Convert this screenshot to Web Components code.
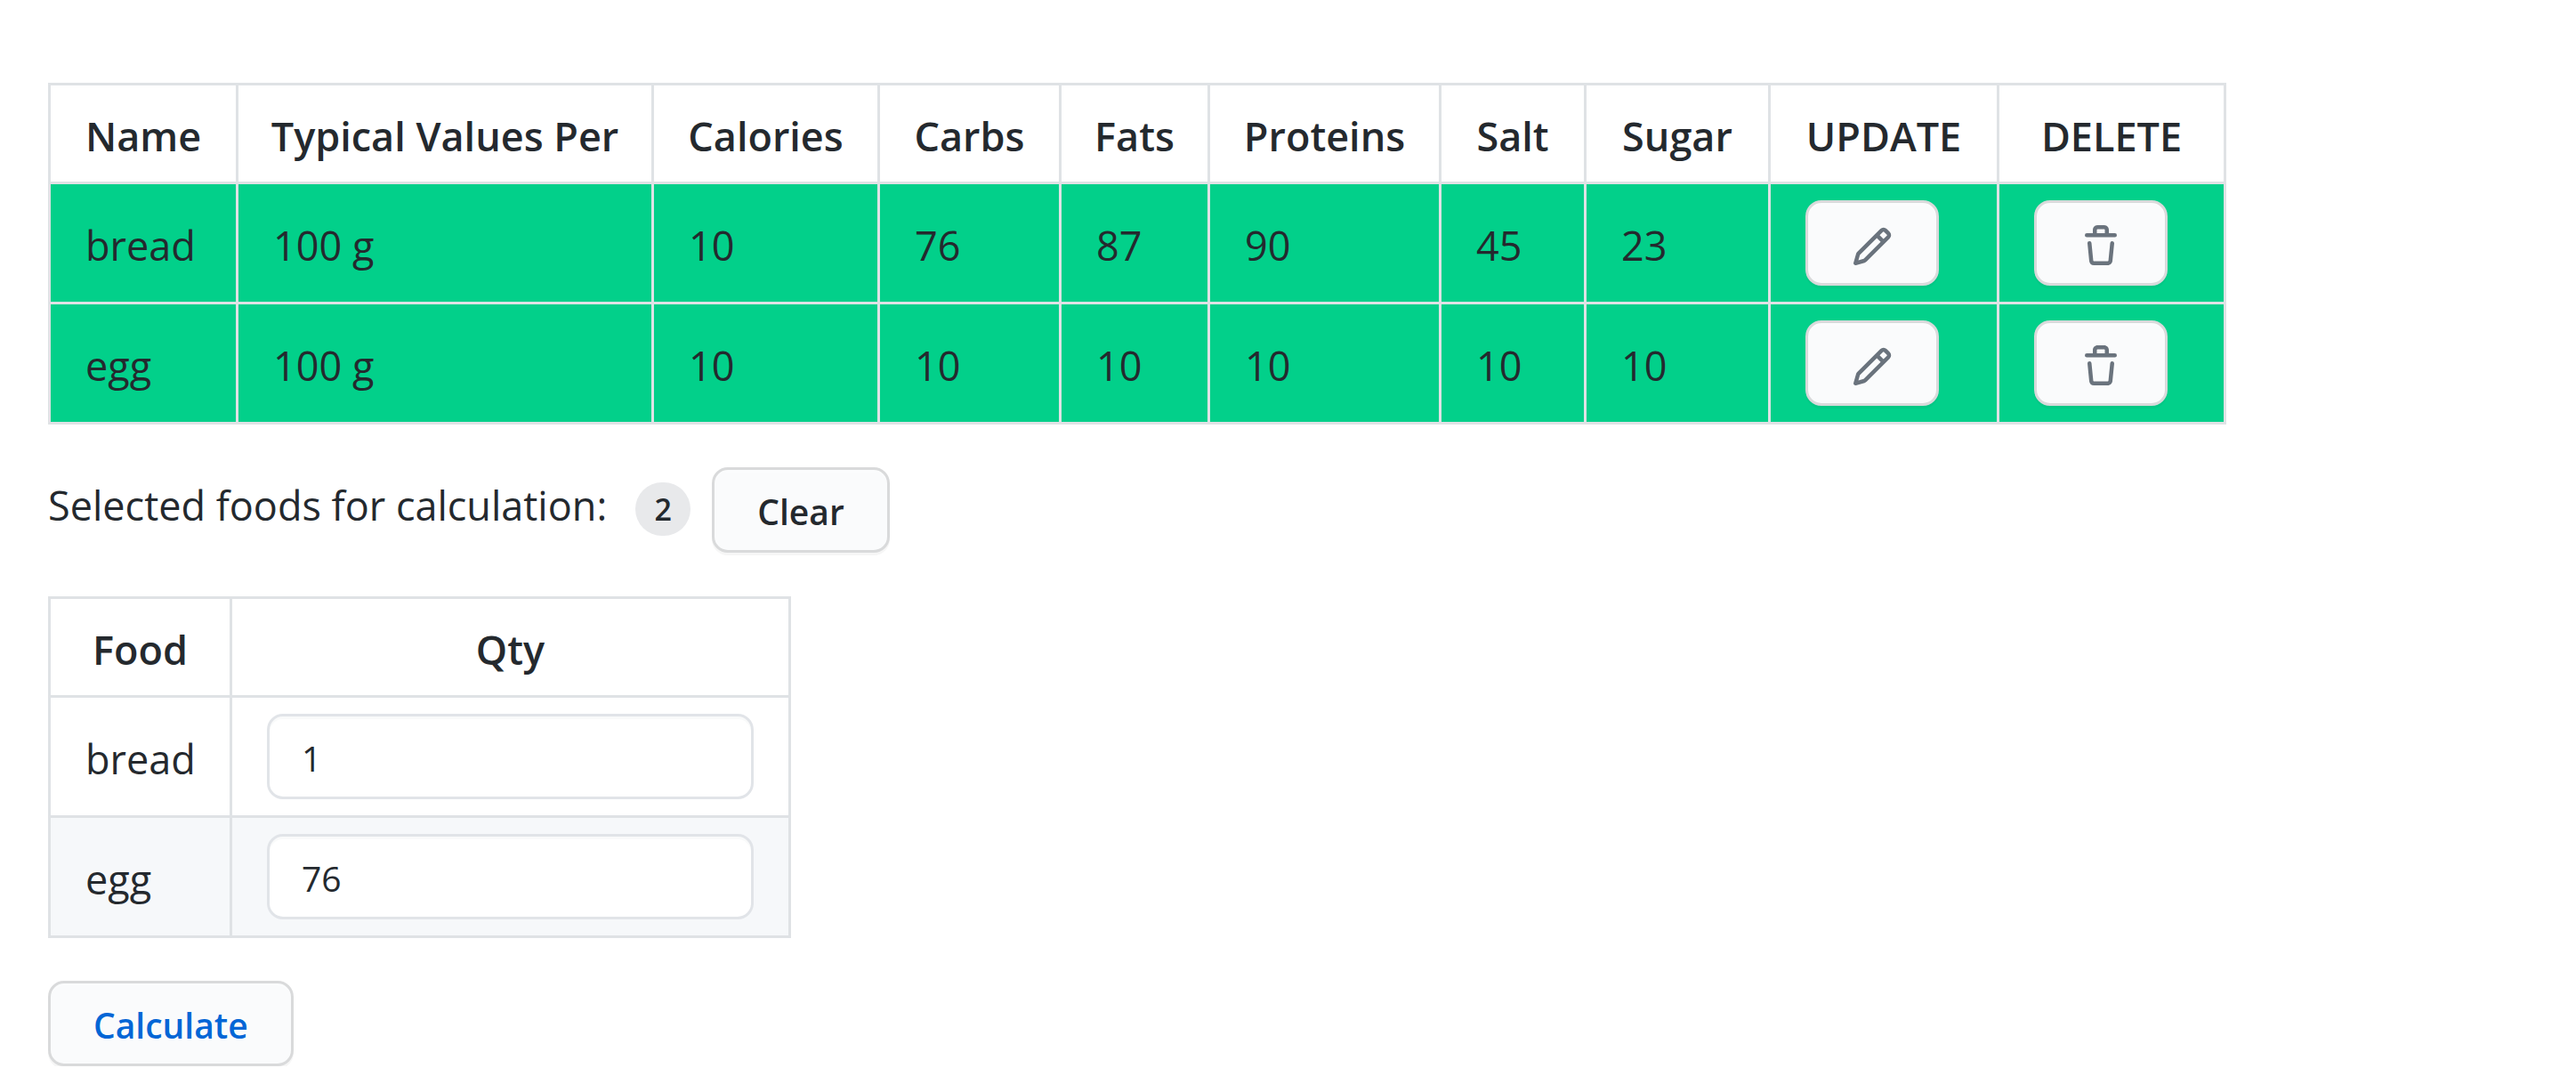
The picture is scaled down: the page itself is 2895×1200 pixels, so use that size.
<!DOCTYPE html>
<html lang="en">
<head>
<meta charset="utf-8">
<title>Foods</title>
<style>
  body {
    margin: 0;
    background: #fff;
    color: #24292e;
    font-family: "Open Sans", "Noto Sans", sans-serif;
    font-size: 45px;
    line-height: 72px;
    --line: #dfe2e5;
  }
</style>
</head>
<body>
<food-page></food-page>

<script>
const ICONS = {
  pencil: 'M11.013 1.427a1.75 1.75 0 012.474 0l1.086 1.086a1.75 1.75 0 010 2.474l-8.61 8.61c-.21.21-.47.364-.756.445l-3.251.93a.75.75 0 01-.927-.928l.929-3.25a1.75 1.75 0 01.445-.758l8.61-8.61zm1.414 1.06a.25.25 0 00-.354 0L10.811 3.75l1.439 1.44 1.263-1.263a.25.25 0 000-.354l-1.086-1.086zM11.189 6.25L9.75 4.81l-6.286 6.287a.25.25 0 00-.064.108l-.558 1.953 1.953-.558a.249.249 0 00.108-.064l6.286-6.286z',
  trash: 'M6.5 1.75a.25.25 0 01.25-.25h2.5a.25.25 0 01.25.25V3h-3V1.75zm4.5 0V3h2.25a.75.75 0 010 1.5H2.75a.75.75 0 010-1.5H5V1.75C5 .784 5.784 0 6.75 0h2.5C10.216 0 11 .784 11 1.75zM4.496 6.675a.75.75 0 10-1.492.15l.66 6.6A1.75 1.75 0 005.405 15h5.19c.9 0 1.652-.681 1.741-1.576l.66-6.6a.75.75 0 00-1.492-.149l-.66 6.6a.25.25 0 01-.249.225h-5.19a.25.25 0 01-.249-.225l-.66-6.6z'
};

const BUTTON_CSS = `
  button {
    display: flex;
    align-items: center;
    justify-content: center;
    box-sizing: border-box;
    height: 96px;
    margin: 0;
    border: 3px solid #d9dadb;
    border-radius: 18px;
    background: #fafbfc;
    box-shadow: 0 3px 0 rgba(27,31,35,.04), inset 0 3px 0 rgba(255,255,255,.25);
    font: inherit;
    cursor: pointer;
  }`;

const TABLE_CSS = `
  :host { display: block; }
  table {
    border-collapse: separate;
    border-spacing: 0;
    border: 0 solid var(--line);
    border-width: 3px 0 0 3px;
  }
  th, td {
    padding: 21px 32px 15px 39px;
    border: 0 solid var(--line);
    border-width: 0 3px 3px 0;
    text-align: left;
    white-space: nowrap;
  }
  th { padding-left: 0; padding-right: 0; font-weight: 600; text-align: center; }
  td.control { padding: 18px 39px; }`;

class AppButton extends HTMLElement {
  connectedCallback() {
    this.attachShadow({ mode: 'open' }).innerHTML = `
      <style>
        :host { display: block; color: #24292e; }
        :host([tone="link"]) { color: #0366d6; }
        ${BUTTON_CSS}
        button { padding: 4px 48px 0; color: inherit; font-size: 39px; font-weight: 600; line-height: 60px; }
      </style>
      <button type="button"><slot></slot></button>`;
  }
}
customElements.define('app-button', AppButton);

class IconButton extends HTMLElement {
  connectedCallback() {
    this.attachShadow({ mode: 'open' }).innerHTML = `
      <style>
        :host { display: block; }
        ${BUTTON_CSS}
        button { padding: 25px 48px 17px; color: #6a737d; }
        svg { display: block; width: 48px; height: 48px; fill: currentColor; }
      </style>
      <button type="button" aria-label="${this.getAttribute('label')}">
        <svg viewBox="0 0 16 16" aria-hidden="true"><path fill-rule="evenodd" d="${ICONS[this.getAttribute('icon')]}"/></svg>
      </button>`;
  }
}
customElements.define('icon-button', IconButton);

class CounterLabel extends HTMLElement {
  connectedCallback() {
    this.attachShadow({ mode: 'open' }).innerHTML = `
      <style>
        :host {
          display: block;
          box-sizing: border-box;
          min-width: 62px;
          padding: 0 18px;
          border-radius: 30px;
          background: #e8e9eb;
          font-size: 34px;
          font-weight: 600;
          line-height: 60px;
          text-align: center;
        }
      </style>
      <slot></slot>`;
  }
}
customElements.define('counter-label', CounterLabel);

class FoodTable extends HTMLElement {
  connectedCallback() {
    const columns = [
      ['Name', 211], ['Typical Values Per', 467], ['Calories', 254], ['Carbs', 204], ['Fats', 167],
      ['Proteins', 260], ['Salt', 163], ['Sugar', 207], ['UPDATE', 257], ['DELETE', 255]
    ];
    const foods = [
      ['bread', '100 g', 10, 76, 87, 90, 45, 23],
      ['egg', '100 g', 10, 10, 10, 10, 10, 10]
    ];
    this.attachShadow({ mode: 'open' }).innerHTML = `
      <style>
        ${TABLE_CSS}
        tbody { background: #02d08a; }
      </style>
      <table>
        <colgroup>${columns.map(c => `<col style="width:${c[1]}px">`).join('')}</colgroup>
        <thead><tr>${columns.map(c => `<th scope="col">${c[0]}</th>`).join('')}</tr></thead>
        <tbody>${foods.map(f => `<tr>${f.map(v => `<td>${v}</td>`).join('')}
          <td class="control"><icon-button icon="pencil" label="Update ${f[0]}"></icon-button></td>
          <td class="control"><icon-button icon="trash" label="Delete ${f[0]}"></icon-button></td></tr>`).join('')}
        </tbody>
      </table>`;
  }
}
customElements.define('food-table', FoodTable);

class QuantityTable extends HTMLElement {
  connectedCallback() {
    const rows = [['bread', 1], ['egg', 76]];
    this.attachShadow({ mode: 'open' }).innerHTML = `
      <style>
        ${TABLE_CSS}
        tbody tr:nth-child(even) { background: #f6f8fa; }
        input {
          display: block;
          box-sizing: border-box;
          width: 547px;
          height: 96px;
          margin: 0;
          padding: 3px 36px 0;
          border: 3px solid #e1e4e8;
          border-radius: 18px;
          background: #fff;
          box-shadow: inset 0 3px 0 rgba(225,228,232,.2);
          color: inherit;
          font: inherit;
          font-size: 39px;
        }
      </style>
      <table>
        <colgroup><col style="width:204px"><col></colgroup>
        <thead><tr><th scope="col">Food</th><th scope="col">Qty</th></tr></thead>
        <tbody>${rows.map(([name, qty]) => `<tr>
          <td><label for="qty-${name}">${name}</label></td>
          <td class="control"><input id="qty-${name}" type="text" inputmode="numeric" value="${qty}"></td></tr>`).join('')}
        </tbody>
      </table>`;
  }
}
customElements.define('quantity-table', QuantityTable);

class FoodPage extends HTMLElement {
  connectedCallback() {
    this.attachShadow({ mode: 'open' }).innerHTML = `
      <style>
        :host { display: block; }
        main {
          display: flex;
          flex-direction: column;
          align-items: flex-start;
          gap: 48px;
          padding: 93px 54px 0;
        }
        .selection { display: flex; align-items: flex-start; gap: 24px; min-height: 97px; }
        .summary { display: flex; align-items: baseline; gap: 32px; padding-top: 7px; }
      </style>
      <main>
        <food-table></food-table>
        <div class="selection">
          <div class="summary"><span>Selected foods for calculation:</span><counter-label>2</counter-label></div>
          <app-button>Clear</app-button>
        </div>
        <quantity-table></quantity-table>
        <app-button tone="link">Calculate</app-button>
      </main>`;
  }
}
customElements.define('food-page', FoodPage);
</script>
</body>
</html>
